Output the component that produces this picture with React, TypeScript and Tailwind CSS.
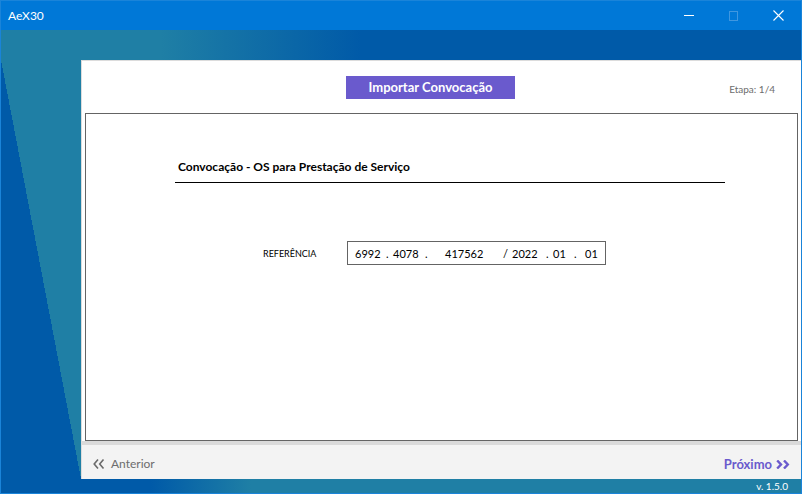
import React from "react";

const font = { fontFamily: 'Lato, "Noto Sans", sans-serif' };

function ChevronsLeft() {
  return (
    <svg width="12" height="10" viewBox="0 0 12 10" className="shrink-0">
      <path d="M5 0.5 L1.2 5 L5 9.5 M10.5 0.5 L6.7 5 L10.5 9.5" fill="none" stroke="#6b6b6b" strokeWidth="1.6" />
    </svg>
  );
}

function ChevronsRight() {
  return (
    <svg width="14" height="9" viewBox="0 0 14 9" className="shrink-0">
      <path d="M1.2 0.5 L5 4.5 L1.2 8.5 M8 0.5 L11.8 4.5 L8 8.5" fill="none" stroke="#6a5acd" strokeWidth="2.4" />
    </svg>
  );
}

export default function App() {
  return (
    <div
      className="w-[802px] h-[494px] border border-[#1a84d9] bg-[#1f7fa5] flex flex-col overflow-hidden text-[#1a1a1a] leading-none"
      style={font}
    >
      {/* title bar */}
      <div className="h-[29px] bg-[#0078d7] flex items-center shrink-0">
        <span className="pl-[7px] text-[12px] text-white">AeX30</span>
        <div className="ml-auto flex items-center">
          <div className="w-[45px] h-[29px] flex items-center justify-center">
            <div className="w-[10px] h-px bg-white" />
          </div>
          <div className="w-[45px] h-[29px] flex items-center justify-center">
            <div className="w-[9px] h-[10px] border border-[#3f97e0]" />
          </div>
          <div className="w-[45px] h-[29px] flex items-center justify-center">
            <svg width="11" height="11" viewBox="0 0 11 11">
              <path d="M0.5 0.5 L10.5 10.5 M10.5 0.5 L0.5 10.5" stroke="white" strokeWidth="1.1" />
            </svg>
          </div>
        </div>
      </div>

      {/* top band */}
      <div className="h-[30px] shrink-0 bg-[linear-gradient(to_right,#1f7fa5_160px,#005aa8_360px)]" />

      {/* middle */}
      <div className="h-[419px] flex shrink-0">
        <div className="w-[80px] bg-[linear-gradient(to_top_right,#005aa8_50%,#1f7fa5_50%)]" />
        <div className="flex-1 bg-white border-l border-t border-[#dcdcdc] flex flex-col">
          {/* header */}
          <div className="h-[52px] flex items-center shrink-0">
            <div className="ml-[264px] w-[169px] h-[23px] bg-[#6a5acd] flex items-center justify-center text-white text-[13px] font-bold">
              Importar Convocação
            </div>
            <span className="ml-auto mr-[26px] mt-[4px] text-[10px] text-[#6d6d6d]">Etapa: 1/4</span>
          </div>

          {/* content box */}
          <div className="mx-[3px] h-[328px] border border-[#646464] shrink-0">
            <div className="ml-[89px] mt-[44px] w-[550px] border-b border-black pb-[8px] pl-[3px] leading-[14px]">
              <span className="text-[12px] font-bold text-black">
                Convocação - OS para Prestação de Serviço
              </span>
            </div>

            <div className="ml-[177px] mt-[58px] flex items-center">
              <span className="w-[84px] text-[9px] text-black">REFERÊNCIA</span>
              <div className="w-[259px] h-[24px] border border-[#646464] flex items-center pl-[7px] text-[11px] text-black">
                <span className="w-[31px]">6992</span>
                <span className="w-[7px]">.</span>
                <span className="w-[32px]">4078</span>
                <span className="w-[20px]">.</span>
                <span className="w-[58px]">417562</span>
                <span className="w-[9px]">/</span>
                <span className="w-[34px]">2022</span>
                <span className="w-[7px]">.</span>
                <span className="w-[21px]">01</span>
                <span className="w-[11px]">.</span>
                <span>01</span>
              </div>
            </div>
          </div>

          {/* divider band */}
          <div className="h-[4px] bg-[#dadada] shrink-0" />

          {/* footer */}
          <div className="flex-1 bg-[#f3f3f3] flex items-center px-[11px] pt-[4px]">
            <div className="flex items-center gap-[6px] text-[12px] text-[#6d6d6d]">
              <ChevronsLeft />
              <span>Anterior</span>
            </div>
            <div className="ml-auto flex items-center gap-[4px] text-[13px] font-bold text-[#6a5acd]">
              <span>Próximo</span>
              <ChevronsRight />
            </div>
          </div>
        </div>
      </div>

      {/* bottom band */}
      <div className="flex-1 bg-[linear-gradient(to_right,#005aa8_150px,#1f7fa5_250px)] flex items-center justify-end pr-[13px]">
        <span className="text-[10px] text-white">v. 1.5.0</span>
      </div>
    </div>
  );
}
